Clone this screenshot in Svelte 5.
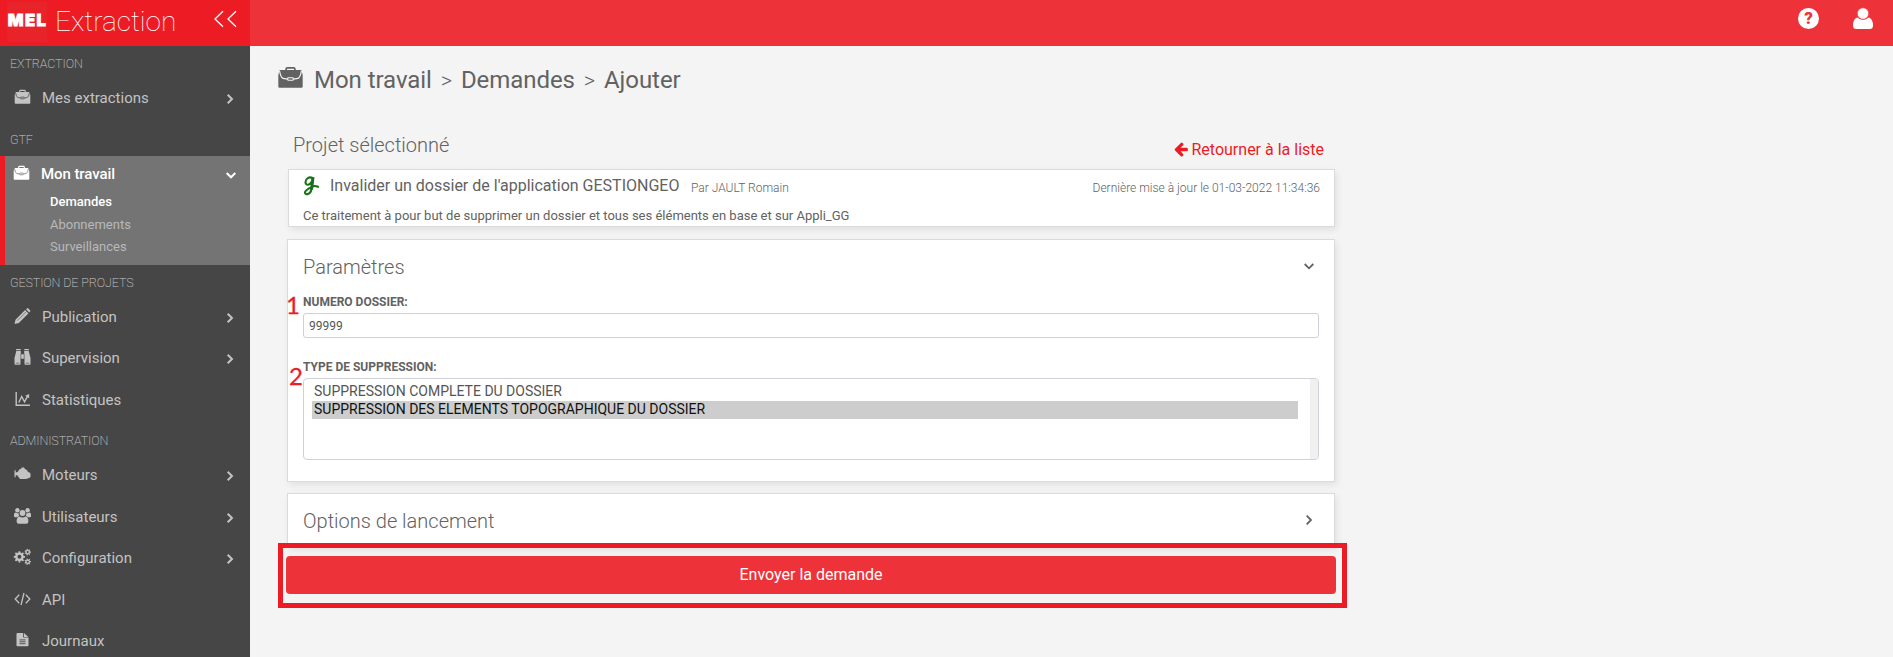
<script>
  const sections = [
    { title: 'EXTRACTION', items: [{ label: 'Mes extractions', icon: 'case', more: true }] },
    {
      title: 'GTF',
      items: [{ label: 'Mon travail', icon: 'case', active: true, children: ['Demandes', 'Abonnements', 'Surveillances'] }]
    },
    {
      title: 'GESTION DE PROJETS',
      items: [
        { label: 'Publication', icon: 'pencil', more: true },
        { label: 'Supervision', icon: 'binoculars', more: true },
        { label: 'Statistiques', icon: 'chart' }
      ]
    },
    {
      title: 'ADMINISTRATION',
      items: [
        { label: 'Moteurs', icon: 'engine', more: true },
        { label: 'Utilisateurs', icon: 'users', more: true },
        { label: 'Configuration', icon: 'cogs', more: true },
        { label: 'API', icon: 'code' },
        { label: 'Journaux', icon: 'file' }
      ]
    }
  ];
  const options = ['SUPPRESSION COMPLETE DU DOSSIER', 'SUPPRESSION DES ELEMENTS TOPOGRAPHIQUE DU DOSSIER'];
  const gear = (cx, cy, r, n, tooth) => {
    let d = '';
    for (let i = 0; i < n; i++) {
      const a = (i * 2 * Math.PI) / n;
      const pts = [[r, -0.5], [r, -0.28], [r + tooth, -0.2], [r + tooth, 0.2], [r, 0.28], [r, 0.5]];
      pts.forEach(([q, f], j) => {
        const t = a + (f * 2 * Math.PI) / n;
        d += `${i + j ? 'L' : 'M'}${(cx + q * Math.cos(t)).toFixed(2)} ${(cy + q * Math.sin(t)).toFixed(2)}`;
      });
    }
    const h = r * 0.45;
    return `${d}Z M${cx - h} ${cy}a${h} ${h} 0 1 0 ${2 * h} 0a${h} ${h} 0 1 0 ${-2 * h} 0Z`;
  };
</script>

{#snippet briefcase(line)}
  <path d="M5.2 2.2V1.4Q5.2.6 6 .6h4q.8 0 .8.8v.8" fill="none" stroke="currentColor" stroke-width="1.1" />
  <path d="M1.6 2.1h12.8q.7 0 .8.7l.6 2.6v7.8q0 .8-.8.8H1q-.8 0-.8-.8V5.4l.6-2.6q.1-.7.8-.7z" fill="currentColor" />
  <path d="M1 2.6Q1.7 7 3.2 7.700l3 .5M15 2.600Q14.300 7 12.800 7.700l-3 .5" fill="none" stroke={line} stroke-width=".75" />
  <rect x="6.2" y="7.3" width="3.6" height="1.7" rx=".4" fill="currentColor" stroke={line} stroke-width=".75" />
{/snippet}

{#snippet navIcon(name, active)}
  <svg class="nav-icon" viewBox="0 0 16 16" aria-hidden="true">
    {#if name === 'case'}
      <g transform="translate(0 .8)">{@render briefcase(active ? '#747474' : '#464646')}</g>
    {:else if name === 'pencil'}
      <path fill="currentColor" d="M0 16l1-4.300L10.600 2.100l3.300 3.300L4.300 15zM11.500 1.300l.9-.9q.7-.6 1.400 0l1.800 1.800q.6.700 0 1.400l-.9.9z" />
      <path d="M2.700 12.700l9-9" stroke="#464646" stroke-width=".5" />
    {:else if name === 'binoculars'}
      <path fill="currentColor" d="M1.600 0h4.600v1.200H1.600zM9.800 0h4.600v1.200H9.800zM1.800 2h4.500v3.200h3.400V2h4.500l1.800 7v6q0 .8-.8.8h-4.400q-.8 0-.8-.8V9.800H6V15q0 .8-.8.8H.8Q0 15.800 0 15V9z" />
      <path d="M1.300 14.200h3.500M11.200 14.200h3.500M6.300 5v5M9.700 5v5" stroke="#464646" stroke-width=".6" />
    {:else if name === 'chart'}
      <path fill="none" stroke="currentColor" stroke-width="1.400" d="M1.700 1v13.200h13.700M4.300 11.500l2.900-6 2.800 5.300 3.500-6.400" />
      <path fill="currentColor" d="M10.800 4.700l3.800-1.700v4.200z" />
    {:else if name === 'engine'}
      <path fill="currentColor" transform="translate(0 .6)" d="M0 3.600h1.200v2.200l2-.4 1.600-2.600L7 2V.9h2.600L10 2l2.800 1.900.7 1.500 2 .8.500 1.200v3l-1.400 1.100-3.200.8H5.500L3 8.900l-1.800-.5v2.200H0z" />
    {:else if name === 'users'}
      <g fill="currentColor">
        <circle cx="2.900" cy="2.200" r="2.200" /><circle cx="13.100" cy="2.200" r="2.200" />
        <path d="M-.500 8.500V6.500q0-1.600 1.300-2.100 2.100 1.200 3.300.500-.1 1.700.7 3-1.300.2-2 1.300H.6q-1.100 0-1.100-.7zM16.500 8.500V6.500q0-1.600-1.300-2.100-2.100 1.200-3.300.500.1 1.700-.7 3 1.300.2 2 1.300h2.200q1.100 0 1.100-.7z" />
        <circle cx="8" cy="5" r="2.900" />
        <path d="M4.900 8.500Q8 10.700 11.100 8.500q2.800.7 2.800 5 0 2.300-2.200 2.300H4.300q-2.200 0-2.200-2.300 0-4.300 2.800-5z" />
      </g>
    {:else if name === 'cogs'}
      <path fill="currentColor" fill-rule="evenodd" d={gear(4.900, 7.800, 4.300, 8, 1.400) + gear(13.200, 3.100, 2.300, 7, 1) + gear(13.200, 12.700, 2.300, 7, 1)} />
    {:else if name === 'code'}
      <path fill="none" stroke="currentColor" stroke-width="1.300" d="M4.700 3.800L.7 8l4 4.200M11.300 3.800l4 4.200-4 4.200M9.500 2L6.500 14.200" />
    {:else if name === 'file'}
      <path fill="currentColor" d="M2 2q0-1 1-1h5.700v4.600H14V13.500q0 .8-.9.8H3q-1 0-1-.8zM9.500 1.100L13.800 5H9.500z" />
      <path d="M5 7.900h6M5 9.800h6M5 11.700h6" stroke="#464646" stroke-width=".9" />
    {/if}
  </svg>
{/snippet}

{#snippet chevron(dir)}
  <svg class="chevron" viewBox="0 0 12 12" aria-hidden="true">
    <path d={dir === 'down' ? 'M1.700 4L6 8.300 10.300 4' : 'M3.700 1.700L8 6 3.700 10.300'} fill="none" stroke="currentColor" stroke-width="2" />
  </svg>
{/snippet}

<div class="app">
  <header>
    <div class="brand">
      <span class="logo">MEL</span>
      <span class="name">Extraction</span>
      <svg class="collapse" viewBox="0 0 24 18"><path d="M10 1.300L2 9l8 7.700M23 1.300L15 9l8 7.700" fill="none" stroke="#fff" stroke-width="1.300" /></svg>
    </div>
    <div class="tools">
      <span class="help">?</span>
      <svg class="user" viewBox="0 0 20 22"><path d="M4.300 9.500Q10 14 15.700 9.500 20 11 20 17.500q0 3.500-3.200 3.500H3.200Q0 21 0 17.500 0 11 4.300 9.500z" fill="#fff" /><circle cx="10" cy="5.500" r="5.700" fill="#fff" stroke="#ed3239" stroke-width=".6" /></svg>
    </div>
  </header>

  <div class="body">
    <nav>
      {#each sections as s}
        <h6>{s.title}</h6>
        {#each s.items as it}
          {#if it.active}
            <div class="active">
              <div class="item">{@render navIcon(it.icon, true)}<span>{it.label}</span>{@render chevron('down')}</div>
              <ul>
                {#each it.children as c, i}<li class:current={i === 0}>{c}</li>{/each}
              </ul>
            </div>
          {:else}
            <div class="item">
              {@render navIcon(it.icon, false)}<span>{it.label}</span>
              {#if it.more}{@render chevron('right')}{/if}
            </div>
          {/if}
        {/each}
      {/each}
    </nav>

    <main>
      <div class="crumbs">
        <svg class="case" viewBox="0 0 16 14.200" preserveAspectRatio="none">{@render briefcase('#f4f4f4')}</svg>
        <span>Mon travail</span><i>&gt;</i><span>Demandes</span><i>&gt;</i><span>Ajouter</span>
      </div>

      <div class="column">
        <div class="bar">
          <h2>Projet sélectionné</h2>
          <a href="#liste">
            <svg viewBox="0 0 1792 1792"><path fill="currentColor" d="M1664 896v128q0 53-32.500 90.500t-84.500 37.500h-704l293 294q38 36 38 90t-38 90l-75 76q-37 37-90 37-52 0-91-37l-651-652q-37-37-37-90 0-52 37-91l651-650q38-38 91-38 52 0 90 38l75 74q38 38 38 91t-38 91l-293 293h704q52 0 84.500 37.500t32.500 90.500z" /></svg><span>Retourner à la liste</span>
          </a>
        </div>

        <section class="card project">
          <div class="line">
            <svg class="g" viewBox="0 0 16 20"><path d="M9.400 2.200C6.500.2 2.300 2.500 2.500 6.500c.2 3.300 4.600 2.800 6.200-.7M9.400 3C9.300 6.500 9 10 8.200 14c-.8 4.400-5.800 5.400-6.200 2.800C1.600 14 7 11.800 10 10.300q2-.8 5 .5" fill="none" stroke="#17731a" stroke-width="2.100" stroke-linecap="round" /><path d="M10.100 1L8.600 13.500" stroke="#17731a" stroke-width="2.800" /></svg>
            <span class="title">Invalider un dossier de l'application GESTIONGEO</span>
            <span class="by">Par JAULT Romain</span>
            <span class="date">Dernière mise à jour le 01-03-2022 11:34:36</span>
          </div>
          <p>Ce traitement à pour but de supprimer un dossier et tous ses éléments en base et sur Appli_GG</p>
        </section>

        <section class="card params">
          <div class="head"><h3>Paramètres</h3>{@render chevron('down')}</div>
          <div class="field">
            <b class="mark one">1</b>
            <label for="num">NUMERO DOSSIER:</label>
            <input id="num" value="99999" />
          </div>
          <div class="field second">
            <b class="mark two">2</b>
            <div class="label">TYPE DE SUPPRESSION:</div>
            <div class="list">
              <div class="options">
                {#each options as o, i}<div class="option" class:selected={i === 1}>{o}</div>{/each}
              </div>
              <div class="track"></div>
            </div>
          </div>
        </section>

        <section class="card launch">
          <div class="head"><h3>Options de lancement</h3>{@render chevron('right')}</div>
        </section>

        <div class="send">
          <button>Envoyer la demande</button>
          <div class="frame"></div>
        </div>
      </div>
    </main>
  </div>
</div>

<style>
  :global(body) { background: #f4f4f4; overflow: hidden; }
  h2, h3, h6, p, ul { margin: 0; padding: 0; }
  .app { height: 657px; overflow: hidden; display: flex; flex-direction: column; font-family: Roboto, "Liberation Sans", sans-serif; color: #626262; }
  header { height: 46px; flex: none; display: flex; background: #ed3239; }
  .brand { width: 250px; height: 46px; box-sizing: border-box; padding-left: 7px; display: flex; align-items: flex-start; background: #ed1c24; color: #fff; }
  .logo { width: 40px; height: 40px; margin-top: 2px; background: #e8242a; font: 900 16.500px/37px Inter, sans-serif; letter-spacing: 1.500px; text-indent: 1px; display: flex; justify-content: center; -webkit-text-stroke: .8px #fff; }
  .name { width: 119px; margin-left: 8px; font-size: 28px; line-height: 43px; font-weight: 100; white-space: nowrap; }
  .collapse { width: 24px; height: 18px; margin: 10px 0 0 39px; }
  .tools { flex: 1; display: flex; justify-content: flex-end; padding: 8px 20px 0 0; gap: 34px; box-sizing: border-box; }
  .help { width: 21px; height: 21px; border-radius: 50%; background: #fff; color: #ed3239; font-size: 17px; line-height: 21px; font-weight: 900; text-align: center; }
  .user { width: 20px; height: 22px; overflow: visible; }
  .body { flex: 1; display: flex; min-height: 0; }
  nav { width: 250px; flex: none; box-sizing: border-box; background: #464646; color: #c3c3c3; padding-top: 4px; overflow: hidden; }
  h6 { height: 27px; line-height: 27px; font-size: 12.500px; font-weight: 200; color: #c8c8c8; padding-left: 10px; margin-top: 7px; letter-spacing: -.1px; }
  h6:first-child { margin-top: 0; }
  h6:last-of-type { line-height: 26px; }
  .item { height: 41.500px; box-sizing: border-box; padding: 0 14px 0 14px; display: flex; align-items: center; font-size: 15px; }
  .item span { flex: 1; margin-left: 11px; }
  .nav-icon { width: 17px; height: 16px; overflow: visible; margin-top: -2px; }
  .chevron { width: 12px; height: 12px; position: relative; top: 1px; }
  .active { height: 109px; margin-top: 3.500px; margin-bottom: -3px; box-sizing: border-box; border-left: 5px solid #ed1c24; background: #747474; color: #fff; }
  .active .item { height: 36px; padding-left: 8px; padding-right: 13px; font-weight: 500; letter-spacing: -.08px; }
  .active ul { list-style: none; padding-left: 45px; font-size: 13px; color: #b9b9b9; }
  .active li { height: 22.500px; line-height: 19px; }
  .active .current { color: #fff; font-weight: 500; }

  main { flex: 1; padding: 0 0 0 27px; }
  .crumbs { height: 68px; display: flex; align-items: center; font-size: 24px; color: #626262; }
  .crumbs span { letter-spacing: -.05px; }
  .case { width: 25px; height: 21px; margin: -5px 11px 0 1px; }
  .crumbs i { width: 29px; text-align: center; font-style: normal; font-weight: 300; font-size: 22px; }
  .column { width: 1048px; margin-left: 10px; }
  .bar { height: 55px; display: flex; justify-content: space-between; padding: 0 11px 0 6px; }
  h2, h3 { font-size: 20px; font-weight: 300; }
  h2 { line-height: 62px; }
  a { color: #ed1c24; text-decoration: none; font-size: 16px; display: flex; align-items: center; height: 71px; }
  a svg { width: 16px; height: 16px; margin-right: 3px; margin-top: -2px; }
  .card { box-sizing: border-box; background: #fff; border: 1px solid #dbdbdb; box-shadow: 2px 3px 7px rgba(0, 0, 0, .08); }
  .project { height: 58px; margin-left: 1px; padding: 1px 14px 0; white-space: nowrap; }
  .line { display: flex; align-items: baseline; height: 32px; line-height: 32px; }
  .g { width: 16px; height: 20px; align-self: center; margin: -2px 11px 0 0; }
  .title { font-size: 16px; width: 349px; position: relative; top: -1px; }
  .by { font-size: 12px; margin-left: 12px; font-weight: 300; }
  .date { margin-left: auto; font-size: 12px; font-weight: 300; }
  p { font-size: 13px; line-height: 26px; }
  .params { height: 243px; margin-top: 12px; padding: 0 15px; }
  .head { display: flex; justify-content: space-between; align-items: center; height: 53px; }
  .head .chevron { margin-right: 4px; margin-top: -4px; }
  .head .chevron path { stroke-width: 1.800; }
  .field { position: relative; }
  .second { margin-top: 20px; }
  label, .label { display: block; height: 20px; line-height: 19px; font-size: 12px; font-weight: 700; }
  input { display: block; width: 100%; height: 25px; box-sizing: border-box; border: 1px solid #ced1da; border-radius: 3px; padding: 0 5px; font: 12px Roboto, sans-serif; color: #555; }
  .mark { position: absolute; font: 400 24px/24px Lato, sans-serif; color: #ed1c24; -webkit-text-stroke: .3px #ed1c24; }
  .one { left: -17px; top: 0; }
  .two { left: -14px; top: 6px; }
  .list { height: 82px; box-sizing: border-box; display: flex; border: 1px solid #ced1da; border-radius: 4px; overflow: hidden; }
  .options { flex: 1; padding: 4px 12px 0 8px; }
  .option { height: 18px; line-height: 17px; padding-left: 2px; font-size: 14px; color: #555; }
  .selected { background: #cdcdcd; color: #111; }
  .track { width: 8px; background: #f0f0f0; }
  .launch { height: 54px; margin-top: 11px; padding: 0 15px; }
  .send { position: relative; margin: 9px -1px 0; }
  button { display: block; width: 1050px; height: 38px; border: 0; border-radius: 4px; background: #ed3239; color: #fff; font: 16px Roboto, sans-serif; padding: 0 0 2px; }
  .frame { position: absolute; left: -8px; top: -13px; width: 1069px; height: 65px; box-sizing: border-box; border: 5px solid #ed1c24; }
</style>
